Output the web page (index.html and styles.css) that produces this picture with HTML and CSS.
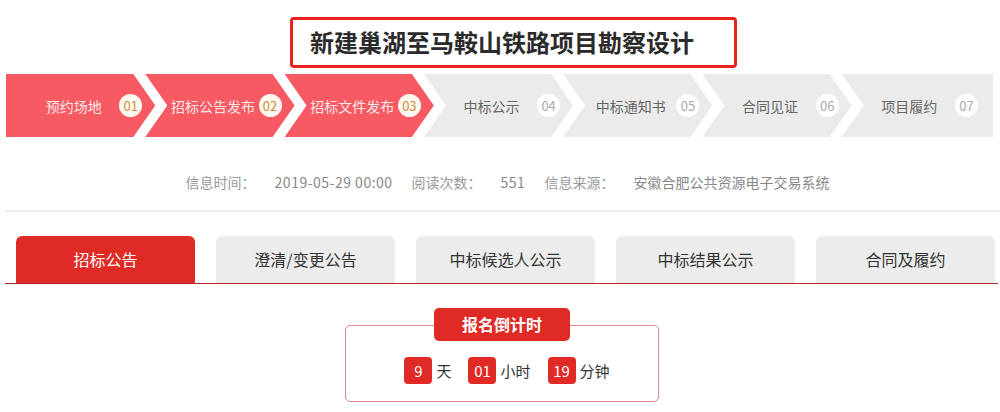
FILE: index.html
```html
<!DOCTYPE html>
<html lang="zh-CN">
<head>
    <meta charset="UTF-8">
    <meta name="viewport" content="width=device-width, initial-scale=1.0">
    <title>新建巢湖至马鞍山铁路项目勘察设计</title>
    <link rel="stylesheet" href="styles.css">
</head>
<body>

    <!-- 标题 -->
    <div class="title-wrap">
        <h1 class="title-box">新建巢湖至马鞍山铁路项目勘察设计</h1>
    </div>

    <!-- 流程步骤 -->
    <div class="steps">
        <div class="step done first"><span class="step-name">预约场地</span><span class="step-num">01</span></div>
        <div class="step done"><span class="step-name">招标公告发布</span><span class="step-num">02</span></div>
        <div class="step done"><span class="step-name">招标文件发布</span><span class="step-num">03</span></div>
        <div class="step"><span class="step-name">中标公示</span><span class="step-num">04</span></div>
        <div class="step"><span class="step-name">中标通知书</span><span class="step-num">05</span></div>
        <div class="step"><span class="step-name">合同见证</span><span class="step-num">06</span></div>
        <div class="step last"><span class="step-name">项目履约</span><span class="step-num">07</span></div>
    </div>

    <!-- 信息 -->
    <div class="info">
        <span class="info-label">信息时间：</span>
        <span class="info-value num">2019-05-29 00:00</span>
        <span class="info-label">阅读次数：</span>
        <span class="info-value num">551</span>
        <span class="info-label">信息来源：</span>
        <span class="info-value">安徽合肥公共资源电子交易系统</span>
    </div>

    <!-- 选项卡 -->
    <div class="tabs">
        <div class="tab active">招标公告</div>
        <div class="tab">澄清/变更公告</div>
        <div class="tab">中标候选人公示</div>
        <div class="tab">中标结果公示</div>
        <div class="tab">合同及履约</div>
    </div>

    <!-- 倒计时 -->
    <div class="countdown">
        <div class="countdown-title">报名倒计时</div>
        <div class="countdown-body">
            <span class="cd-num">9</span><span class="cd-unit">天</span>
            <span class="cd-num">01</span><span class="cd-unit">小时</span>
            <span class="cd-num">19</span><span class="cd-unit">分钟</span>
        </div>
    </div>

</body>
</html>
```

FILE: styles.css
```css
body {
    margin: 0;
    background: #fff;
    color: #333;
    font-family: "Noto Sans CJK SC", "Liberation Sans", sans-serif;
}
.title-wrap {
    padding-top: 17px;
}
.title-box {
    box-sizing: border-box;
    width: 447px;
    height: 51px;
    margin: 0 0 0 290px;
    padding-left: 17px;
    border: 3px solid #e8231f;
    border-radius: 4px;
    font-size: 24px;
    font-weight: bold;
    line-height: 44px;
    color: #2b2b2b;
    white-space: nowrap;
}
.steps {
    display: flex;
    margin: 6px 7px 0 6px;
    height: 63px;
}
.step {
    flex: 1 1 0;
    min-width: 0;
    display: flex;
    align-items: center;
    margin-left: -10px;
    padding: 0 13px 0 22px;
    background: #ebebeb;
    color: #666;
    font-size: 14px;
    clip-path: polygon(0 0, calc(100% - 22px) 0, 100% 50%, calc(100% - 22px) 100%, 0 100%, 22px 50%);
}
.step.first {
    margin-left: 0;
    padding-left: 22px;
    clip-path: polygon(0 0, calc(100% - 22px) 0, 100% 50%, calc(100% - 22px) 100%, 0 100%);
}
.step.last {
    padding-right: 15px;
    clip-path: polygon(0 0, 100% 0, 100% 100%, 0 100%, 22px 50%);
}
.step.done {
    background: #f85a64;
    color: #fde8e8;
}
.step-name {
    flex: 1;
    text-align: center;
    white-space: nowrap;
}
.step-num {
    flex: none;
    width: 23px;
    height: 23px;
    border-radius: 50%;
    background: #fff;
    color: #aaa;
    font-size: 13px;
    line-height: 23px;
    text-align: center;
}
.step.done .step-num {
    color: #cf8a3b;
    background: #fffaf2;
}
.info {
    display: flex;
    justify-content: center;
    gap: 0 19px;
    margin: 34px 0 0 5px;
    padding: 0 0 17px 10px;
    border-bottom: 2px solid #eee;
    font-size: 14px;
    line-height: 22px;
}
.info-label {
    color: #999;
}
.info-value {
    color: #888;
}
.info-value.num {
    letter-spacing: 0.5px;
}
.tabs {
    display: flex;
    gap: 21px;
    margin: 24px 2px 0 5px;
    padding-left: 11px;
    border-bottom: 1px solid #b3262c;
}
.tab {
    width: 179px;
    height: 47px;
    border-radius: 6px 6px 0 0;
    background: #ececec;
    color: #333;
    font-size: 16px;
    line-height: 47px;
    text-align: center;
}
.tab.active {
    background: #e02a25;
    color: #fff;
}
.countdown {
    position: relative;
    box-sizing: border-box;
    width: 314px;
    height: 77px;
    margin: 41px 0 0 345px;
    border: 1px solid #d98a8e;
    border-radius: 5px;
}
.countdown-title {
    position: absolute;
    top: -18px;
    left: 88px;
    width: 136px;
    height: 33px;
    border-radius: 5px;
    background: #e02a25;
    color: #fff;
    font-size: 16px;
    font-weight: bold;
    line-height: 33px;
    text-align: center;
}
.countdown-body {
    display: flex;
    align-items: center;
    justify-content: center;
    padding: 31px 0 0 10px;
    font-size: 15px;
}
.cd-num {
    min-width: 28px;
    height: 27px;
    padding: 0 1px;
    box-sizing: border-box;
    border-radius: 4px;
    background: #e02a25;
    color: #fff;
    line-height: 27px;
    text-align: center;
}
.cd-unit {
    margin: 0 17px 0 4px;
    color: #333;
}
.cd-unit:last-child {
    margin-right: 0;
}
```
